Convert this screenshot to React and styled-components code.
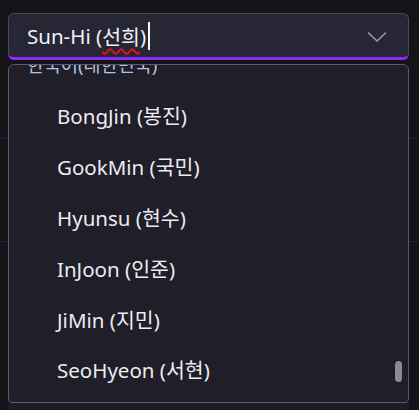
import { useEffect, useRef } from "react";
import styled, { createGlobalStyle } from "styled-components";

const GlobalStyle = createGlobalStyle`
    html, body {
        margin: 0;
        background: #131318;
    }
    body {
        font-family: "Noto Sans", "Noto Sans CJK KR", sans-serif;
        -webkit-font-smoothing: antialiased;
    }
`;

// names shown in the open list, below the group header
const names = [
    "BongJin (봉진)",
    "GookMin (국민)",
    "Hyunsu (현수)",
    "InJoon (인준)",
    "JiMin (지민)",
    "SeoHyeon (서현)",
];

const App = () => {
    const listRef = useRef(null);

    // the list is scrolled down a little, so the header is cut at the top
    useEffect(() => {
        if (listRef.current) listRef.current.scrollTop = 27;
    }, []);

    return (
        <Page>
            <GlobalStyle />
            <FieldArea>
                <Field>
                    <Value>
                        Sun-Hi (<Misspelled>선희</Misspelled>)<Caret />
                    </Value>
                    <svg width="20" height="12" viewBox="0 0 20 12">
                        <polyline
                            points="1,1.5 10,10 19,1.5"
                            fill="none"
                            stroke="#9a99aa"
                            strokeWidth="1.6"
                        />
                    </svg>
                </Field>
            </FieldArea>
            <Band $height={79} />
            <Band $height={103} />
            <Band $height={161} $last />
            <Footer />

            <Dropdown>
                <List ref={listRef}>
                    <GroupHeader>한국어(대한민국)</GroupHeader>
                    {names.map((name) => (
                        <Item key={name}>{name}</Item>
                    ))}
                    <Spacer />
                </List>
                <Thumb />
            </Dropdown>
        </Page>
    );
};

const Page = styled.div`
    position: relative;
    width: 419px;
    height: 410px;
    overflow: hidden;
    background: #131318;
`;
const FieldArea = styled.div`
    padding: 13px 10px 0 8px;
`;
const Field = styled.div`
    box-sizing: border-box;
    height: 47px;
    display: flex;
    align-items: center;
    justify-content: space-between;
    padding: 0 21px 0 18px;
    background: #272635;
    border: 1px solid #4a495b;
    border-bottom: 3px solid #8b2df2;
    border-radius: 6px;
    svg {
        margin-top: 2px;
    }
`;
const Value = styled.div`
    display: flex;
    align-items: center;
    font-size: 20.5px;
    color: #f2f2f6;
    white-space: pre;
    margin-top: 1px;
`;
const Misspelled = styled.span`
    text-decoration: underline wavy #e81123;
    text-decoration-thickness: 1.5px;
    text-underline-offset: 3px;
`;
const Caret = styled.span`
    display: inline-block;
    width: 1.5px;
    height: 28px;
    margin-left: 2px;
    background: #f5f5f5;
`;
const Band = styled.div`
    height: ${(p) => p.$height}px;
    border-bottom: ${(p) => (p.$last ? "none" : "1px solid #24232c")};
    box-sizing: border-box;
`;
const Footer = styled.div`
    height: 20px;
    margin: 0 10px 0 8px;
    background: #1d1c25;
`;
const Dropdown = styled.div`
    position: absolute;
    top: 64px;
    left: 8px;
    width: 401px;
    height: 339px;
    box-sizing: border-box;
    background: #1f1e29;
    border: 1px solid #5b5a70;
    border-radius: 6px 6px 4px 4px;
    overflow: hidden;
`;
const List = styled.div`
    height: 100%;
    overflow-y: auto;
    scrollbar-width: none;
    &::-webkit-scrollbar {
        display: none;
    }
`;
const GroupHeader = styled.div`
    height: 52px;
    display: flex;
    align-items: center;
    padding-left: 18px;
    font-size: 18.5px;
    color: #b7c3dc;
`;
const Item = styled.div`
    height: 50.8px;
    display: flex;
    align-items: center;
    padding-left: 48px;
    font-size: 20.5px;
    color: #ececf1;
`;
const Spacer = styled.div`
    height: 60px;
`;
const Thumb = styled.div`
    position: absolute;
    right: 6px;
    top: 296px;
    width: 7px;
    height: 21px;
    border-radius: 4px;
    background: #8a8994;
`;

export default App;
